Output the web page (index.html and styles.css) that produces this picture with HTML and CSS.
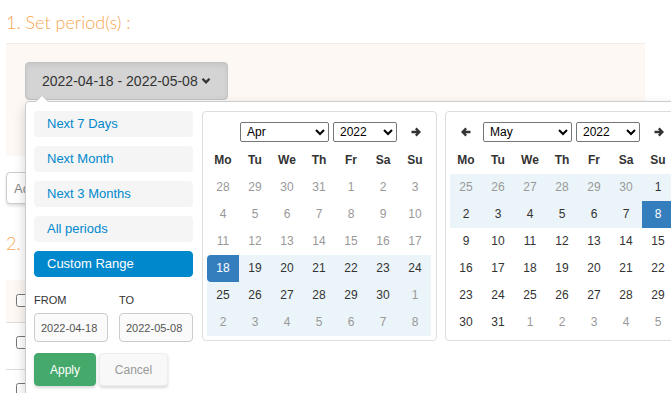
FILE: index.html
```html
<!DOCTYPE html>
<html>
<head>
<meta charset="utf-8">
<link rel="stylesheet" href="styles.css">
</head>
<body>
<div class="page">
  <h2 class="step">1. Set period(s) :</h2>
  <div class="period-panel">
    <button class="range-btn">2022-04-18 - 2022-05-08 <svg class="chev" width="10" height="8" viewBox="0 0 10 8"><path d="M1.5 1.8 L5 5.3 L8.5 1.8" fill="none" stroke="#333" stroke-width="2.3"/></svg></button>
  </div>
  <div class="toolbar"><button class="add-btn">Add</button></div>
  <h2 class="step step-2">2. Select :</h2>
  <div class="items">
    <div class="item-row item-head"><input type="checkbox"></div>
    <div class="item-row"><input type="checkbox"></div>
    <div class="item-row"><input type="checkbox"></div>
  </div>
</div>

<div class="picker">
  <div class="ranges">
    <ul class="range-list">
      <li>Next 7 Days</li>
      <li>Next Month</li>
      <li>Next 3 Months</li>
      <li>All periods</li>
      <li class="active">Custom Range</li>
    </ul>
    <div class="range-inputs">
      <div class="range-field"><label>FROM</label><input type="text" value="2022-04-18"></div>
      <div class="range-field"><label>TO</label><input type="text" value="2022-05-08"></div>
    </div>
    <div class="range-buttons">
      <button class="btn-apply">Apply</button>
      <button class="btn-cancel">Cancel</button>
    </div>
  </div>

  <div class="calendar">
    <div class="cal-head">
      <span class="nav"></span>
      <span class="selects">
        <select class="sel-month"><option>Apr</option></select>
        <select class="sel-year"><option>2022</option></select>
      </span>
      <span class="nav"><svg width="10" height="10" viewBox="0 0 10 10"><path d="M0.5 5H8.2M4.8 1.4L8.4 5L4.8 8.6" fill="none" stroke="#333" stroke-width="2.3"/></svg></span>
    </div>
    <div class="days">
      <span class="dn">Mo</span><span class="dn">Tu</span><span class="dn">We</span><span class="dn">Th</span><span class="dn">Fr</span><span class="dn">Sa</span><span class="dn">Su</span>
      <span class="off">28</span><span class="off">29</span><span class="off">30</span><span class="off">31</span><span class="off">1</span><span class="off">2</span><span class="off">3</span>
      <span class="off">4</span><span class="off">5</span><span class="off">6</span><span class="off">7</span><span class="off">8</span><span class="off">9</span><span class="off">10</span>
      <span class="off">11</span><span class="off">12</span><span class="off">13</span><span class="off">14</span><span class="off">15</span><span class="off">16</span><span class="off">17</span>
      <span class="start">18</span><span class="in">19</span><span class="in">20</span><span class="in">21</span><span class="in">22</span><span class="in">23</span><span class="in">24</span>
      <span class="in">25</span><span class="in">26</span><span class="in">27</span><span class="in">28</span><span class="in">29</span><span class="in">30</span><span class="in off">1</span>
      <span class="in off">2</span><span class="in off">3</span><span class="in off">4</span><span class="in off">5</span><span class="in off">6</span><span class="in off">7</span><span class="in off">8</span>
    </div>
  </div>

  <div class="calendar">
    <div class="cal-head">
      <span class="nav"><svg width="10" height="10" viewBox="0 0 10 10"><path d="M9.5 5H1.8M5.2 1.4L1.6 5L5.2 8.6" fill="none" stroke="#333" stroke-width="2.3"/></svg></span>
      <span class="selects">
        <select class="sel-month"><option>May</option></select>
        <select class="sel-year"><option>2022</option></select>
      </span>
      <span class="nav"><svg width="10" height="10" viewBox="0 0 10 10"><path d="M0.5 5H8.2M4.8 1.4L8.4 5L4.8 8.6" fill="none" stroke="#333" stroke-width="2.3"/></svg></span>
    </div>
    <div class="days">
      <span class="dn">Mo</span><span class="dn">Tu</span><span class="dn">We</span><span class="dn">Th</span><span class="dn">Fr</span><span class="dn">Sa</span><span class="dn">Su</span>
      <span class="in off">25</span><span class="in off">26</span><span class="in off">27</span><span class="in off">28</span><span class="in off">29</span><span class="in off">30</span><span class="in">1</span>
      <span class="in">2</span><span class="in">3</span><span class="in">4</span><span class="in">5</span><span class="in">6</span><span class="in">7</span><span class="end">8</span>
      <span>9</span><span>10</span><span>11</span><span>12</span><span>13</span><span>14</span><span>15</span>
      <span>16</span><span>17</span><span>18</span><span>19</span><span>20</span><span>21</span><span>22</span>
      <span>23</span><span>24</span><span>25</span><span>26</span><span>27</span><span>28</span><span>29</span>
      <span>30</span><span>31</span><span class="off">1</span><span class="off">2</span><span class="off">3</span><span class="off">4</span><span class="off">5</span>
    </div>
  </div>
</div>
</body>
</html>
```

FILE: styles.css
```css
html, body {
  margin: 0;
  background: #fff;
  overflow: hidden;
  font-family: "Liberation Sans", Arial, sans-serif;
  color: #333;
}

.page {
  padding: 0 26px 0 6px;
}

.step {
  margin: 0 0 9px;
  padding-top: 10px;
  font: 300 18px/24px Lato, "Open Sans", sans-serif;
  color: #f6a653;
}

.period-panel {
  box-sizing: border-box;
  height: 113px;
  background: #fdf8f3;
  border-top: 1px solid #f0ebe5;
  padding: 18px 19px;
}

.range-btn {
  box-sizing: border-box;
  height: 38px;
  padding: 0 16px;
  display: flex;
  align-items: center;
  gap: 3px;
  font: 14px "Liberation Sans", Arial, sans-serif;
  color: #333;
  background: #d4d4d4;
  border: 1px solid #c2c2c2;
  border-radius: 4px;
  box-shadow: inset 0 3px 5px rgba(0,0,0,0.06);
}

.toolbar {
  margin-top: 16px;
}

.add-btn {
  height: 32px;
  padding: 0 7px;
  font: 13px "Liberation Sans", Arial, sans-serif;
  color: #888;
  background: #fff;
  border: 1px solid #ccc;
  border-radius: 4px;
  box-shadow: 0 2px 3px rgba(0,0,0,0.12);
}

.step-2 {
  margin: 27px 0 25px;
  padding: 0;
}

.item-row {
  box-sizing: border-box;
  height: 47px;
  padding: 12px 0 0 10px;
  border-bottom: 1px solid #ddd;
}

.item-head {
  height: 43px;
  padding-top: 13px;
  background: #fdf8f3;
}

.item-row input {
  margin: 0;
  width: 13px;
  height: 13px;
}

/* picker overlay */
.picker {
  position: absolute;
  left: 25px;
  top: 101px;
  display: flex;
  align-items: flex-start;
  padding: 9px 8px 8px;
  background: #fff;
  border: 1px solid #ccc;
  border-radius: 4px;
  box-shadow: 0 5px 12px rgba(0,0,0,0.18);
}

.picker::before,
.picker::after {
  content: "";
  position: absolute;
  border-style: solid;
  border-color: transparent;
}

.picker::before {
  left: 9px;
  top: -7px;
  border-width: 0 7px 7px;
  border-bottom-color: #ccc;
}

.picker::after {
  left: 10px;
  top: -6px;
  border-width: 0 6px 6px;
  border-bottom-color: #fff;
}

.ranges {
  width: 159px;
  font-size: 13px;
}

.range-list {
  list-style: none;
  margin: 0;
  padding: 0;
}

.range-list li {
  box-sizing: border-box;
  height: 26px;
  line-height: 18px;
  padding: 3px 12px;
  margin-bottom: 9px;
  background: #f5f5f5;
  border: 1px solid #f5f5f5;
  border-radius: 4px;
  color: #08c;
}

.range-list li.active {
  background: #08c;
  border-color: #08c;
  color: #fff;
  margin-bottom: 0;
}

.range-inputs {
  display: flex;
  gap: 11px;
  margin-top: 16px;
}

.range-field label {
  display: block;
  font-size: 11px;
  line-height: 14px;
  color: #333;
  margin-bottom: 6px;
}

.range-field input {
  box-sizing: border-box;
  width: 74px;
  height: 29px;
  padding: 0 6px;
  font: 11px "Liberation Sans", Arial, sans-serif;
  color: #555;
  background: #fafafa;
  border: 1px solid #ccc;
  border-radius: 4px;
}

.range-buttons {
  display: flex;
  gap: 3px;
  margin-top: 11px;
}

.range-buttons button {
  height: 33px;
  font: 12px "Liberation Sans", Arial, sans-serif;
  border-radius: 4px;
}

.btn-apply {
  width: 62px;
  color: #fff;
  background: #46a96c;
  border: 1px solid #46a96c;
  box-shadow: 0 2px 3px rgba(0,0,0,0.15);
}

.btn-cancel {
  width: 69px;
  color: #999;
  background: #f8f8f8;
  border: 1px solid #eee;
  box-shadow: 0 2px 3px rgba(0,0,0,0.15);
}

.calendar {
  flex: none;
  margin-left: 9px;
  padding: 4px;
  border: 1px solid #ddd;
  border-radius: 4px;
  background: #fff;
}

.calendar + .calendar {
  margin-left: 8px;
}

.cal-head {
  display: flex;
  align-items: center;
  height: 31px;
}

.nav {
  width: 32px;
  display: flex;
  justify-content: center;
  align-items: center;
}

.selects {
  width: 160px;
  display: flex;
  gap: 4px;
  padding-left: 1px;
}

.selects select {
  height: 20px;
  font: 12px "Liberation Sans", Arial, sans-serif;
  color: #000;
  border: 1px solid #767676;
  border-radius: 2px;
  background: #fff;
  padding: 0 2px;
}

.sel-month { width: 89px; }
.sel-year { width: 64px; }

.days {
  display: grid;
  grid-template-columns: repeat(7, 32px);
  grid-auto-rows: 27px;
  font-size: 12px;
  text-align: center;
  line-height: 27px;
  color: #333;
}

.days .dn {
  font-weight: bold;
}

.days .in {
  background: #ebf4f8;
}

.days .off {
  color: #999;
}

.days .start,
.days .end {
  background: #357ebd;
  color: #fff;
}

.days .start {
  border-radius: 4px 0 0 4px;
}

.days .end {
  border-radius: 0 4px 4px 0;
}
```
